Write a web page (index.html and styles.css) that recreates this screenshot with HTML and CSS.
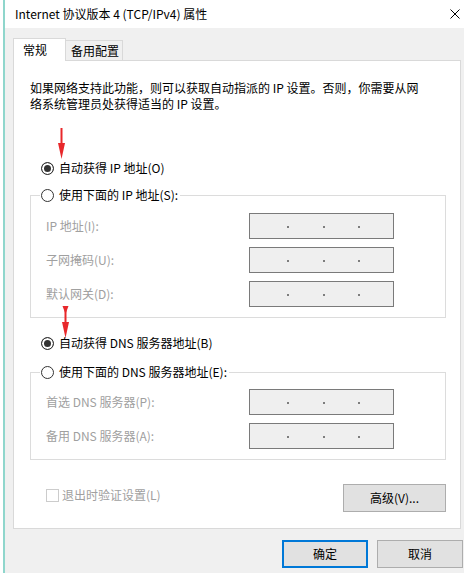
FILE: index.html
```html
<!DOCTYPE html>
<html lang="zh-CN">
<head>
    <meta charset="UTF-8">
    <title>Internet 协议版本 4 (TCP/IPv4) 属性</title>
    <link rel="stylesheet" href="styles.css">
</head>
<body>
<div class="window">
    <div class="titlebar">
        <span class="title">Internet 协议版本 4 (TCP/IPv4) 属性</span>
        <svg class="close" width="10" height="10" viewBox="0 0 10 10">
            <path d="M0.5 0.5L9.5 9.5M9.5 0.5L0.5 9.5" stroke="#000" stroke-width="1" fill="none"/>
        </svg>
    </div>

    <div class="content">
        <div class="tabs">
            <div class="tab active">常规</div>
            <div class="tab">备用配置</div>
        </div>

        <div class="panel">
            <p class="desc">如果网络支持此功能，则可以获取自动指派的 IP 设置。否则，你需要从网<br>络系统管理员处获得适当的 IP 设置。</p>

            <label class="radio auto-ip"><span class="circle checked"></span>自动获得 IP 地址(O)</label>

            <fieldset class="group ip-group">
                <legend><label class="radio"><span class="circle"></span>使用下面的 IP 地址(S):</label></legend>
                <div class="row">
                    <span class="lbl">IP 地址(I):</span>
                    <div class="ipbox"><span></span><span></span><span></span></div>
                </div>
                <div class="row">
                    <span class="lbl">子网掩码(U):</span>
                    <div class="ipbox"><span></span><span></span><span></span></div>
                </div>
                <div class="row">
                    <span class="lbl">默认网关(D):</span>
                    <div class="ipbox"><span></span><span></span><span></span></div>
                </div>
            </fieldset>

            <label class="radio auto-dns"><span class="circle checked"></span>自动获得 DNS 服务器地址(B)</label>

            <fieldset class="group dns-group">
                <legend><label class="radio"><span class="circle"></span>使用下面的 DNS 服务器地址(E):</label></legend>
                <div class="row">
                    <span class="lbl">首选 DNS 服务器(P):</span>
                    <div class="ipbox"><span></span><span></span><span></span></div>
                </div>
                <div class="row">
                    <span class="lbl">备用 DNS 服务器(A):</span>
                    <div class="ipbox"><span></span><span></span><span></span></div>
                </div>
            </fieldset>

            <div class="options">
                <label class="check"><span class="box"></span>退出时验证设置(L)</label>
                <button class="btn advanced">高级(V)...</button>
            </div>
        </div>

        <div class="buttons">
            <button class="btn ok">确定</button>
            <button class="btn">取消</button>
        </div>
    </div>

    <!-- red annotation arrows -->
    <svg class="arrow arrow-ip" width="9" height="32" viewBox="0 0 9 32">
        <path d="M4.5 0V18" stroke="#e8282b" stroke-width="2"/>
        <polygon points="1,15 8,15 4.5,31" fill="#e8282b"/>
    </svg>
    <svg class="arrow arrow-dns" width="9" height="33" viewBox="0 0 9 33">
        <polygon points="1.5,0 7.5,0 4.5,8" fill="#e8282b"/>
        <path d="M4.5 4V19" stroke="#e8282b" stroke-width="2"/>
        <polygon points="1,16 8,16 4.5,32" fill="#e8282b"/>
    </svg>
</div>
</body>
</html>
```

FILE: styles.css
```css
body {
    margin: 0;
    height: 573px;
    overflow: hidden;
    background: #fff;
    font-family: "Noto Sans CJK SC", "Microsoft YaHei", sans-serif;
    font-size: 12px;
    line-height: 16px;
    color: #000;
}

.window {
    position: relative;
    height: 573px;
    margin-left: 3px;
    border-left: 2px solid #8fd6cc;
    background: #f0f0f0;
}

.titlebar {
    height: 28px;
    background: #fff;
    display: flex;
    align-items: center;
    justify-content: space-between;
    padding: 0 4px 0 10px;
}

.content {
    padding: 10px 1px 0 8px;
}

.tabs {
    display: flex;
    align-items: flex-end;
    height: 22px;
}

.tab {
    height: 19px;
    padding: 0 3px 0 5px;
    border: 1px solid #d9d9d9;
    border-bottom: none;
    border-left: none;
    background: #f0f0f0;
    display: flex;
    align-items: center;
}

.tab.active {
    position: relative;
    z-index: 1;
    height: 22px;
    margin-bottom: -1px;
    padding: 0 18px 0 9px;
    border-left: 1px solid #d9d9d9;
    background: #fff;
}

.panel {
    margin-right: 2px;
    padding: 19px 14px 16px 16px;
    border: 1px solid #d9d9d9;
    background: #fff;
}

.desc {
    margin: 0;
}

.radio {
    display: flex;
    align-items: center;
    gap: 5px;
    height: 16px;
    white-space: nowrap;
}

.circle {
    width: 11px;
    height: 11px;
    border: 1px solid #333;
    border-radius: 50%;
    background: #fff;
    flex: none;
}

.circle.checked {
    background: #333;
    box-shadow: inset 0 0 0 2px #fff;
}

.auto-ip {
    margin: 48px 0 0 11px;
}

.auto-dns {
    margin: 17px 0 0 11px;
}

.group {
    margin: 11px 0 0;
    padding: 10px 0 10px 15px;
    border: 1px solid #dcdcdc;
    min-width: 0;
    display: flex;
    flex-direction: column;
    gap: 8px;
}

.dns-group {
    margin-top: 13px;
    padding-top: 9px;
}

.group legend {
    margin-left: -6px;
    padding: 0 2px 0 1px;
}

.row {
    display: flex;
    align-items: center;
    height: 26px;
}

.lbl {
    width: 203px;
    color: #a0a0a0;
}

.ipbox {
    box-sizing: border-box;
    width: 145px;
    height: 26px;
    border: 1px solid #7a7a7a;
    background: #efefef;
    display: flex;
    align-items: center;
    justify-content: space-evenly;
    padding-left: 4px;
}

.ipbox span {
    width: 2px;
    height: 2px;
    margin-top: 2px;
    background: #7d7d7d;
}

.options {
    margin-top: 24px;
    display: flex;
    justify-content: space-between;
    align-items: flex-start;
}

.check {
    display: flex;
    align-items: center;
    gap: 3px;
    margin: 3px 0 0 16px;
    color: #a0a0a0;
}

.box {
    width: 11px;
    height: 11px;
    border: 1px solid #cccccc;
}

.btn {
    font: inherit;
    color: #000;
    height: 28px;
    width: 86px;
    padding: 0;
    border: 1px solid #adadad;
    background: #e1e1e1;
}

.advanced {
    width: 103px;
}

.buttons {
    margin-top: 11px;
    display: flex;
    justify-content: flex-end;
    gap: 9px;
}

.btn.ok {
    border: 2px solid #0078d7;
}

.arrow {
    position: absolute;
}

.arrow-ip {
    left: 52px;
    top: 128px;
}

.arrow-dns {
    left: 56px;
    top: 306px;
}
```
